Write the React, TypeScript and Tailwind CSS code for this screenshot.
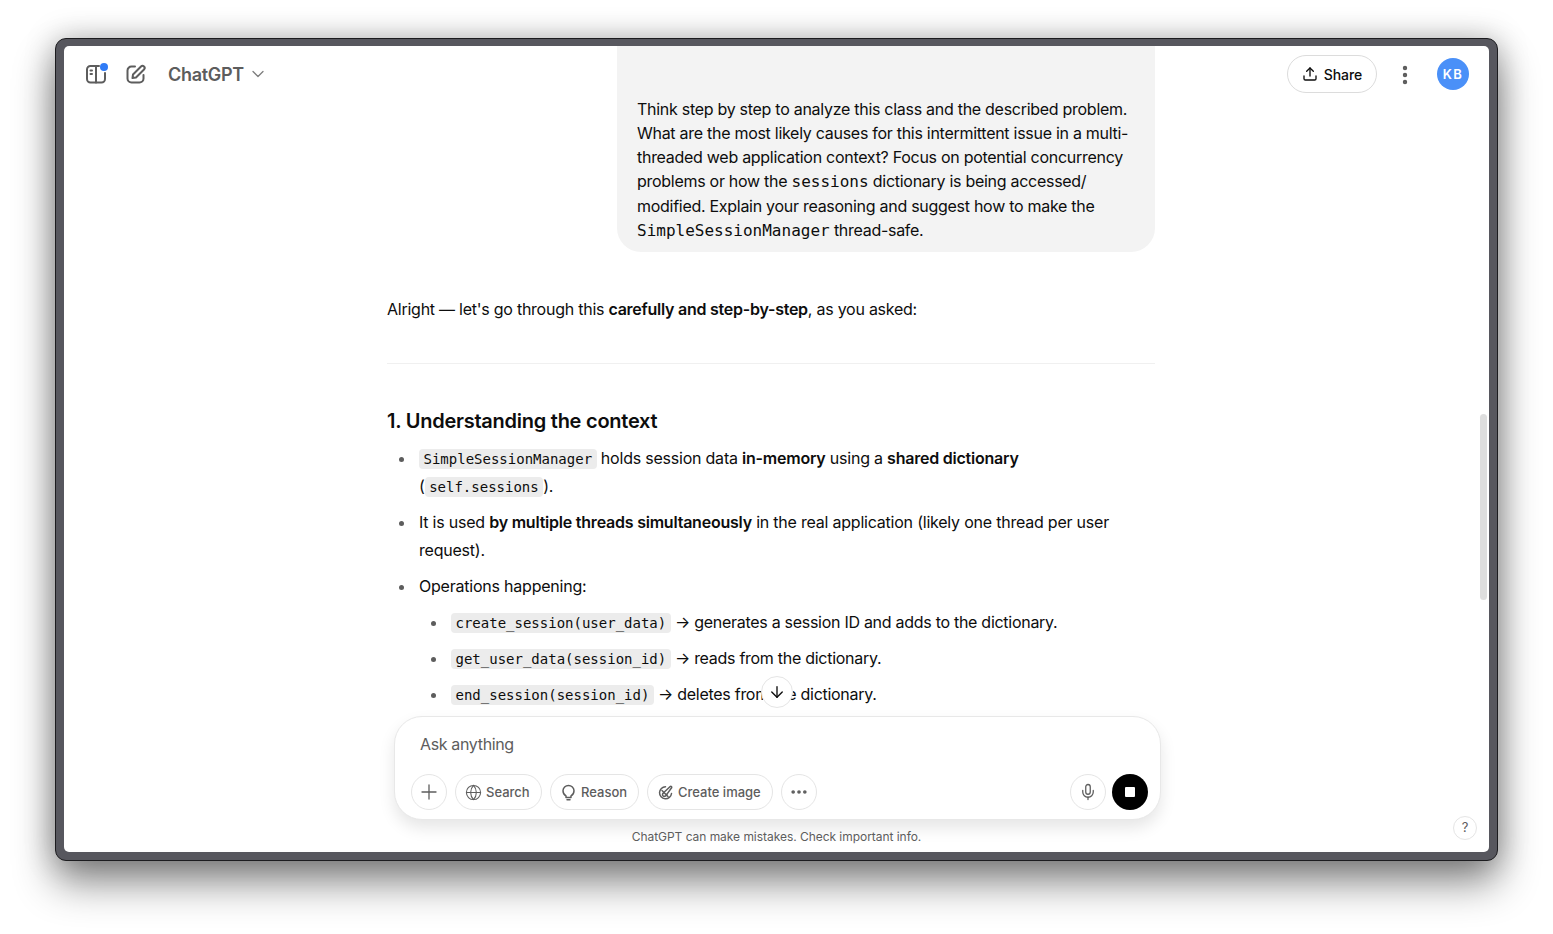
import { ArrowDown, Ellipsis, EllipsisVertical, Globe, Mic, Plus, ChevronDown, Upload } from 'lucide-react';
import { ReactNode } from 'react';

const sans = { fontFamily: 'Inter, "Liberation Sans", sans-serif' };

function Code({ children }: { children: ReactNode }) {
  return (
    <code className="rounded-[4px] bg-[#ececec] px-[4.5px] py-[2px] font-['DejaVu_Sans_Mono',monospace] text-sm tracking-normal text-[#0d0d0d]">
      {children}
    </code>
  );
}

function Mono({ children }: { children: ReactNode }) {
  return <code className="font-['DejaVu_Sans_Mono',monospace] text-base tracking-normal">{children}</code>;
}

function SidebarIcon() {
  return (
    <svg width="24" height="24" viewBox="0 0 24 24" fill="none" stroke="#5d5d5d" strokeWidth="2" strokeLinecap="round">
      <path d="M15 4H6.500A3.500 3.500 0 0 0 3 7.500v9.500a3.500 3.500 0 0 0 3.500 3.500h11a3.500 3.500 0 0 0 3.500-3.500v-6" />
      <path d="M12 4v16.500" />
      <path d="M6.500 8.500h1.500M6.500 12h1.500" />
    </svg>
  );
}

function ComposeIcon() {
  return (
    <svg width="22" height="22" viewBox="0 0 22 22" fill="none" stroke="#5d5d5d" strokeWidth="2" strokeLinecap="round" strokeLinejoin="round">
      <path d="M10 3.500H6.500a4 4 0 0 0-4 4v8a4 4 0 0 0 4 4h8a4 4 0 0 0 4-4V12" />
      <path d="M8 11.500 16 3.500a2.100 2.100 0 0 1 3 3l-8 8-3.500.5z" />
    </svg>
  );
}

function BulbIcon() {
  return (
    <svg width="17" height="17" viewBox="0 0 17 17" fill="none" stroke="#5d5d5d" strokeWidth="1.500" strokeLinecap="round" strokeLinejoin="round">
      <path d="M6 12c-1.800-1-3-3-3-5.200C3 3.800 5.500 1.500 8.500 1.500S14 3.800 14 6.800c0 2.200-1.200 4.200-3 5.200v1.500H6z" />
      <path d="M7 15.800h3" />
    </svg>
  );
}

function CreateImageIcon() {
  return (
    <svg width="17" height="17" viewBox="0 0 17 17" fill="none" stroke="#5d5d5d" strokeWidth="1.500" strokeLinecap="round" strokeLinejoin="round">
      <path d="M8.500 2.800A6 6 0 1 0 14.500 9.500" />
      <path d="M6.800 8.500 13.200 2.500c.8-.7 2 .3 1.400 1.300l-4.800 6.600" />
      <path d="M5 6.500l6 6" />
      <path d="M6.500 9c-1.200.6-1.300 2.200-.4 3 .9.700 2.800.4 3.700-1.600" />
    </svg>
  );
}

function Chip({ icon, label, width }: { icon: ReactNode; label: string; width: string }) {
  return (
    <button className={`flex h-9 items-center gap-1 rounded-full border border-[#e5e5e5] pl-[9px] text-[13px] font-medium text-[#5d5d5d] ${width}`}>
      {icon}
      <span className="pt-px">{label}</span>
    </button>
  );
}

function RoundButton({ children }: { children: ReactNode }) {
  return (
    <button className="flex h-9 w-9 items-center justify-center rounded-full border border-[#e5e5e5] text-[#5d5d5d]">
      {children}
    </button>
  );
}

function Header() {
  return (
    <header className="absolute left-0 right-0 top-0 z-10 flex h-14 items-center pl-5 pr-5">
      <div className="relative flex h-6 w-6 items-center justify-center">
        <SidebarIcon />
        <span className="absolute right-0 top-px h-2 w-2 rounded-full bg-[#2f7bf6]" />
      </div>
      <div className="ml-[17px]">
        <ComposeIcon />
      </div>
      <div className="ml-[21px] flex items-center text-[#5d5d5d]">
        <span className="pt-px text-lg font-semibold tracking-[-0.3px]">ChatGPT</span>
        <ChevronDown size={20} strokeWidth={1.5} className="ml-[4px] text-[#7d7d7d]" />
      </div>
      <div className="ml-auto flex items-center">
        <button className="flex h-[38px] w-[90px] items-center justify-center gap-[6px] rounded-full border border-[#dcdcdc] text-sm font-medium tracking-[-0.1px] text-[#0d0d0d]">
          <Upload size={16} strokeWidth={2} />
          <span className="pt-px">Share</span>
        </button>
        <EllipsisVertical className="ml-4 mt-px text-[#5d5d5d]" size={24} strokeWidth={2.4} />
        <div className="ml-5 flex h-8 w-8 items-center justify-center rounded-full bg-[#4a90f8] pt-px text-[13px] font-semibold tracking-[1.5px] text-white">
          KB
        </div>
      </div>
    </header>
  );
}

function Conversation() {
  return (
    <div className="min-h-0 flex-1 overflow-hidden pr-[11px]">
      <div className="mx-auto w-[768px] text-base tracking-[-0.25px] text-[#0d0d0d]">
        <div className="ml-auto w-[538px] rounded-b-3xl bg-[#f3f3f3] px-5 pb-[9px] pt-[51px] leading-6 tracking-[-0.28px]">
          Think step by step to analyze this class and the described problem. What are the most likely causes for this intermittent issue in a multi-threaded web application context? Focus on potential concurrency problems or how the <Mono>sessions</Mono> dictionary is being accessed/<wbr />modified. Explain your reasoning and suggest how to make the <Mono>SimpleSessionManager</Mono> thread-safe.
        </div>

        <p className="mt-[45px] leading-6">
          Alright — let's go through this <strong className="font-semibold">carefully and step-by-step</strong>, as you asked:
        </p>
        <hr className="mt-[42px] border-[#f0f0f0]" />
        <h3 className="mt-[43px] text-xl font-semibold leading-7 text-[#0d0d0d]">1. Understanding the context</h3>

        <ul className="mt-[9px] flex list-disc flex-col gap-2 pl-[29px] leading-7 tracking-[-0.22px] marker:text-[#5d5d5d]">
          <li className="pl-[3px]">
            <Code>SimpleSessionManager</Code> holds session data <strong className="font-semibold">in-memory</strong> using a <strong className="font-semibold">shared dictionary</strong> (<Code>self.sessions</Code>).
          </li>
          <li className="pl-[3px]">
            It is used <strong className="font-semibold">by multiple threads simultaneously</strong> in the real application (likely one thread per user request).
          </li>
          <li className="pl-[3px]">
            Operations happening:
            <ul className="mt-2 flex list-disc flex-col gap-2 pl-[29px] tracking-[-0.28px]">
              <li className="pl-[3px]">
                <Code>create_session(user_data)</Code> → generates a session ID and adds to the dictionary.
              </li>
              <li className="pl-[3px]">
                <Code>get_user_data(session_id)</Code> → reads from the dictionary.
              </li>
              <li className="pl-[3px]">
                <Code>end_session(session_id)</Code> → deletes from the dictionary.
              </li>
            </ul>
          </li>
        </ul>
      </div>
    </div>
  );
}

function Composer() {
  return (
    <div className="ml-[330px] mt-2 flex h-[104px] w-[767px] flex-col rounded-[28px] border border-[#e8e8e8] bg-white pb-[9px] pl-4 pr-3 shadow-[0_8px_16px_rgba(0,0,0,0.1)]">
      <div className="mt-[15px] pl-[9px] text-base leading-6 tracking-[-0.35px] text-[#5d5d5d]">Ask anything</div>
      <div className="mt-auto flex items-center gap-2">
        <RoundButton>
          <Plus size={24} strokeWidth={1.3} />
        </RoundButton>
        <Chip icon={<Globe size={17} strokeWidth={1.5} />} label="Search" width="w-[87px]" />
        <Chip icon={<BulbIcon />} label="Reason" width="w-[89px]" />
        <Chip icon={<CreateImageIcon />} label="Create image" width="w-[126px]" />
        <RoundButton>
          <Ellipsis size={20} strokeWidth={2.4} />
        </RoundButton>
        <div className="ml-auto flex items-center gap-[6px]">
          <RoundButton>
            <Mic size={18} strokeWidth={1.7} />
          </RoundButton>
          <button className="flex h-9 w-9 items-center justify-center rounded-full bg-black">
            <span className="h-[10px] w-[10px] rounded-[1px] bg-white" />
          </button>
        </div>
      </div>
    </div>
  );
}

export default function App() {
  return (
    <div className="h-[934px] w-[1553px] overflow-hidden bg-white pl-[55px] pt-[38px]" style={sans}>
      <div className="h-[823px] w-[1443px] rounded-[11px] border border-[#1c1c1f] bg-[#57575e] px-2 pb-2 pt-[7px] shadow-[0_22px_40px_rgba(0,0,0,0.45),0_0_30px_rgba(0,0,0,0.25)]">
        <div className="relative flex h-[806px] flex-col overflow-hidden rounded-[5px] bg-white">
          <Header />
          <Conversation />
          <Composer />
          <p className="flex h-8 items-center justify-center pt-[2px] text-xs tracking-[-0.04px] text-[#5d5d5d]">
            ChatGPT can make mistakes. Check important info.
          </p>

          <button className="absolute left-[697px] top-[630px] flex h-8 w-8 items-center justify-center rounded-full border border-[#e5e5e5] bg-white text-[#0d0d0d]">
            <ArrowDown size={18} strokeWidth={1.8} />
          </button>
          <div className="absolute right-[2px] top-[368px] h-[186px] w-[7px] rounded-full bg-[#dedede]" />
          <button className="absolute bottom-[12px] right-[12px] flex h-6 w-6 items-center justify-center rounded-full border border-[#e5e5e5] text-[13px] text-[#5d5d5d]">
            ?
          </button>
        </div>
      </div>
    </div>
  );
}
